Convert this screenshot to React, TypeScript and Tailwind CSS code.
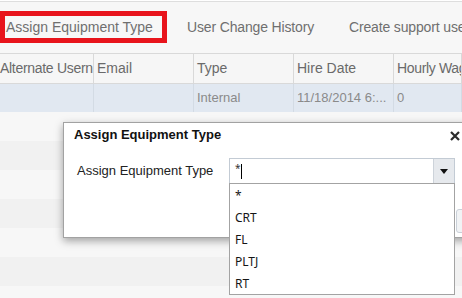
import React from "react";

// Grid background rows under the selected row
const stripeRows = ["bg-[#f7f7f7]", "bg-[#f1f1f1]", "bg-[#f7f7f7]", "bg-[#f1f1f1]", "bg-[#f7f7f7]", "bg-[#f1f1f1]", "bg-[#f7f7f7]"];

const options = ["*", "CRT", "FL", "PLTJ", "RT"];

function HeaderCell({ label, className }: { label: string; className: string }) {
  return (
    <div className={["h-full shrink-0 overflow-hidden whitespace-nowrap border-r border-[#d9d9d9] pt-[4px]", className].join(" ")}>
      {label}
    </div>
  );
}

function DataCell({ label, className }: { label: string; className: string }) {
  return (
    <div className={["flex h-full shrink-0 items-center overflow-hidden whitespace-nowrap border-r border-[#d3dbe4]", className].join(" ")}>
      {label}
    </div>
  );
}

export default function App() {
  return (
    <div className="relative h-[298px] w-[462px] overflow-hidden bg-[#f7f7f7] font-['Liberation_Sans',Arial,sans-serif]">
      {/* ── Tabs ─────────────────────────────────────────────── */}
      <div className="h-px bg-white" />
      <div className="h-px bg-[#dedede]" />
      <div className="flex h-[51px] items-start pt-[9px] text-[14px] text-[#6f6f6f]">
        <div className="flex h-[32px] w-[167px] shrink-0 items-center border-[5px] border-[#e8141c] pl-px whitespace-nowrap">
          Assign Equipment Type
        </div>
        <div className="ml-[20px] flex h-[32px] w-[162px] shrink-0 items-center whitespace-nowrap tracking-[-0.15px]">User Change History</div>
        <div className="flex h-[32px] shrink-0 items-center whitespace-nowrap tracking-[-0.15px]">Create support use</div>
      </div>

      {/* ── Grid ─────────────────────────────────────────────── */}
      <div className="flex h-[31px] border-y border-[#d9d9d9] bg-[#f6f6f6] text-[14px] text-[#6a6a6a]">
        <HeaderCell label="Alternate Usern" className="w-[94px] tracking-[-0.3px]" />
        <HeaderCell label="Email" className="w-[100px] pl-[3px]" />
        <HeaderCell label="Type" className="w-[100px] pl-[3px]" />
        <HeaderCell label="Hire Date" className="w-[100px] pl-[3px]" />
        <HeaderCell label="Hourly Wag" className="w-[68px] pl-[3px] tracking-[-0.35px]" />
      </div>
      <div className="flex h-[28px] bg-[#e1e8f1] text-[13px] text-[#8a8a8a]">
        <DataCell label="" className="w-[94px]" />
        <DataCell label="" className="w-[100px] pl-[3px]" />
        <DataCell label="Internal" className="w-[100px] pl-[3px]" />
        <DataCell label="11/18/2014 6:..." className="w-[100px] pl-[3px]" />
        <DataCell label="0" className="w-[68px] pl-[3px]" />
      </div>
      {stripeRows.map((c, i) => (
        <div key={i} className={["h-[29px]", c].join(" ")} />
      ))}

      {/* ── Dialog ───────────────────────────────────────────── */}
      <div className="absolute left-[63px] top-[122px] h-[116px] w-[410px] border border-[#a2a2a2] bg-white shadow-[0_3px_8px_rgba(0,0,0,0.35)]">
        <div className="flex h-[24px] items-center pl-[10px] text-[13px] font-bold text-[#111]">Assign Equipment Type</div>
        <svg className="absolute left-[386px] top-[8px]" width="10" height="10" viewBox="0 0 10 10">
          <path d="M1 1 9 9M9 1 1 9" stroke="#2b2b2b" strokeWidth="2.2" />
        </svg>

        <div className="mt-[11px] flex items-center pl-[13px]">
          <div className="w-[152px] shrink-0 text-[13px] text-[#222]">Assign Equipment Type</div>
          <div className="relative flex h-[26px] w-[226px] shrink-0 border border-[#c3cbd4] bg-white">
            <div className="flex flex-1 items-center pl-[5px] font-['Noto_Sans',sans-serif] text-[10px] text-[#333]">
              <span className="-mt-[5px]">*</span>
              <span className="h-[15px] w-px bg-black" />
            </div>
            <div className="flex w-[21px] items-center justify-center border-l border-[#cdd3da] bg-[#e6e9ed]">
              <svg width="8" height="5" viewBox="0 0 8 5">
                <path d="M0 0h8L4 5z" fill="#111" />
              </svg>
            </div>

            {/* Dropdown list */}
            <div className="absolute -left-px top-full z-10 h-[112px] w-[226px] border border-[#a3a3a3] bg-white pt-px font-['Noto_Sans',sans-serif] text-[12px] text-[#151515]">
              {options.map((o) => (
                <div key={o} className="h-[22px] pl-[5px] leading-[22px]">
                  {o}
                </div>
              ))}
            </div>
          </div>
        </div>

        <div className="absolute left-[392px] top-[86px] h-[24px] w-[60px] rounded-[3px] border border-[#c9d0d8] bg-[#f1f3f5]" />
      </div>
    </div>
  );
}
